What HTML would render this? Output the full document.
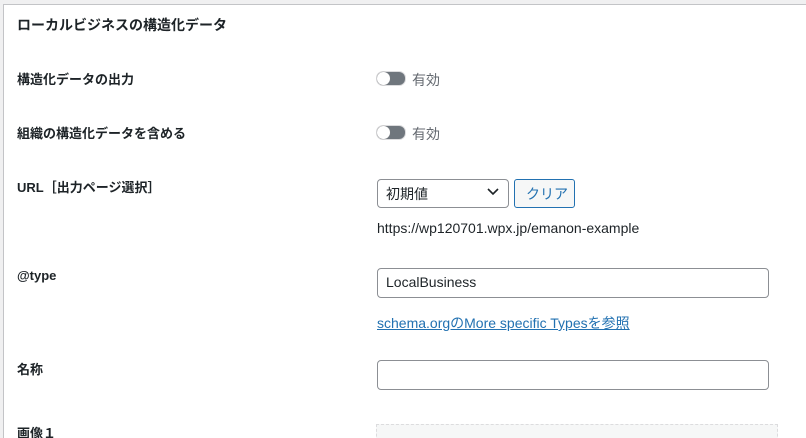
<!DOCTYPE html>
<html><head><meta charset="utf-8"><style>
html,body{margin:0;width:806px;height:438px;overflow:hidden}
body{background:#f0f0f1;font-family:"Liberation Sans","Noto Sans CJK JP",sans-serif;color:#1d2327;font-size:13px;position:relative}
.box{position:absolute;left:3px;top:4px;width:810px;height:440px;background:#fff;border:1px solid #c3c4c7}
.a{position:absolute;white-space:nowrap}
.lb{font-weight:bold;font-size:13px}
.tg{position:absolute;width:28px;height:13px;border-radius:7px;background:#6f767d;border:1px solid #dcdcde}
.tg:before{content:"";position:absolute;left:0;top:0;width:13px;height:13px;border-radius:50%;background:#fff;box-shadow:0 0 1px #888}
.in{position:absolute;border:1px solid #8c8f94;border-radius:4px;background:#fff}
.t{font-size:14px}
</style></head><body>
<div class="box"></div>
<div class="a lb" style="left:17px;top:15px;font-size:14px">ローカルビジネスの構造化データ</div>
<div class="a lb" style="left:17px;top:69px">構造化データの出力</div>
<div class="a lb" style="left:17px;top:123px">組織の構造化データを含める</div>
<div class="a lb" style="left:17px;top:177px">URL［出力ページ選択］</div>
<div class="a lb" style="left:17px;top:268px">@type</div>
<div class="a lb" style="left:17px;top:359px">名称</div>
<div class="a lb" style="left:17px;top:423px">画像１</div>
<div class="tg" style="left:376px;top:71px"></div><div class="a t" style="left:412px;top:70px;color:#646970">有効</div>
<div class="tg" style="left:376px;top:125px"></div><div class="a t" style="left:412px;top:124px;color:#646970">有効</div>
<div class="in" style="left:377px;top:179px;width:130px;height:27px"></div>
<div class="a t" style="left:386px;top:184px">初期値</div>
<svg class="a" style="left:487px;top:187px" width="12" height="10"><path d="M1 2l5 5 5-5" fill="none" stroke="#1d2327" stroke-width="1.6"/></svg>
<div class="a" style="left:514px;top:179px;width:59px;height:27px;border:1px solid #2271b1;border-radius:3px;background:#f6f7f7"></div>
<div class="a t" style="left:526px;top:184px;color:#2271b1">クリア</div>
<div class="a t" style="left:377px;top:220px">https://wp120701.wpx.jp/emanon-example</div>
<div class="in" style="left:377px;top:268px;width:390px;height:28px"></div>
<div class="a t" style="left:386px;top:274px">LocalBusiness</div>
<div class="a t" style="left:377px;top:313px;color:#2271b1;text-decoration:underline">schema.orgのMore specific Typesを参照</div>
<div class="in" style="left:377px;top:360px;width:390px;height:28px"></div>
<div class="a" style="left:376px;top:424px;width:400px;height:30px;border:1px dashed #dcdcde;background:#f6f7f7"></div>
</body></html>
